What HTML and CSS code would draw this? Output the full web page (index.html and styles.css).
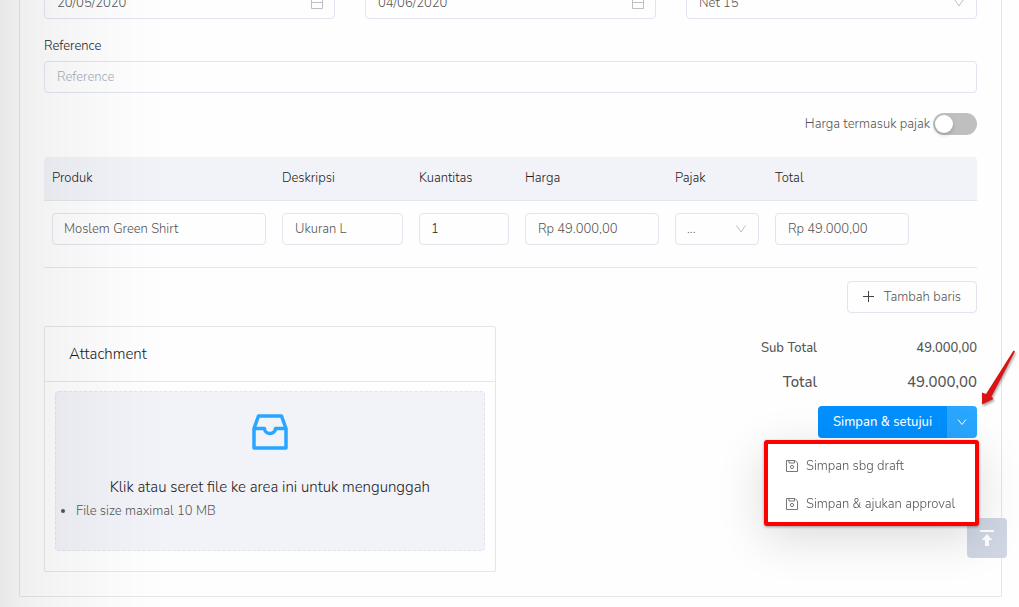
FILE: index.html
```html
<!DOCTYPE html>
<html lang="id">
<head>
<meta charset="utf-8">
<meta name="viewport" content="width=device-width, initial-scale=1">
<title>Tagihan</title>
<link rel="stylesheet" href="styles.css">
</head>
<body>
<main class="card">
  <div class="fields">
    <div class="control">
      <input class="input" type="text" value="20/05/2020" aria-label="Tanggal transaksi">
      <svg class="control-icon" viewBox="0 0 14 14" aria-hidden="true"><path d="M1.500 2.500h11v10h-11zM1.500 6.500h11M4.500 1v3M9.500 1v3"/></svg>
    </div>
    <div class="control">
      <input class="input" type="text" value="04/06/2020" aria-label="Tanggal jatuh tempo">
      <svg class="control-icon" viewBox="0 0 14 14" aria-hidden="true"><path d="M1.500 2.500h11v10h-11zM1.500 6.500h11M4.500 1v3M9.500 1v3"/></svg>
    </div>
    <div class="control">
      <select class="input select" aria-label="Termin"><option>Net 15</option></select>
      <svg class="control-icon" viewBox="0 0 14 14" aria-hidden="true"><path d="M2.500 3.500L7 10l4.500-6.500"/></svg>
    </div>
  </div>

  <div class="reference">
    <label class="label" for="reference">Reference</label>
    <input class="input" id="reference" type="text" placeholder="Reference">
  </div>

  <div class="tax">
    <label for="tax">Harga termasuk pajak</label>
    <input class="switch" id="tax" type="checkbox" role="switch">
  </div>

  <table class="items">
    <colgroup>
      <col class="c-product"><col class="c-desc"><col class="c-qty"><col class="c-price"><col class="c-tax"><col class="c-price"><col class="c-end">
    </colgroup>
    <thead>
      <tr><th>Produk</th><th>Deskripsi</th><th>Kuantitas</th><th>Harga</th><th>Pajak</th><th>Total</th><th></th></tr>
    </thead>
    <tbody>
      <tr>
        <td><input class="input snug" type="text" value="Moslem Green Shirt" aria-label="Produk"></td>
        <td><input class="input" type="text" value="Ukuran L" aria-label="Deskripsi"></td>
        <td><input class="input snug dark" type="text" value="1" aria-label="Kuantitas"></td>
        <td><input class="input" type="text" value="Rp 49.000,00" aria-label="Harga"></td>
        <td>
          <div class="control">
            <select class="input select snug" aria-label="Pajak"><option>...</option></select>
            <svg class="control-icon" viewBox="0 0 14 14" aria-hidden="true"><path d="M2.500 3.500L7 10l4.500-6.500"/></svg>
          </div>
        </td>
        <td><input class="input" type="text" value="Rp 49.000,00" aria-label="Total"></td>
        <td></td>
      </tr>
    </tbody>
  </table>

  <div class="add-row">
    <button class="button" type="button">
      <svg class="plus" viewBox="0 0 12 12" aria-hidden="true"><path d="M5.500 0v11M0 5.500h11"/></svg>
      Tambah baris
    </button>
  </div>

  <div class="bottom">
    <section class="attachment">
      <h2 class="attachment-title">Attachment</h2>
      <div class="attachment-body">
        <div class="dropzone">
          <input class="file" id="file" type="file">
          <label class="drop-label" for="file">
            <svg class="inbox" viewBox="0 0 36 36" aria-hidden="true"><path d="M6.500 2h23L34 14.500V34H2V14.500zM2 14.500h10.500a5.500 5 0 0 0 11 0H34"/></svg>
            Klik atau seret file ke area ini untuk mengunggah
          </label>
          <ul class="hints"><li>File size maximal 10 MB</li></ul>
        </div>
      </div>
    </section>

    <section class="summary">
      <dl class="totals">
        <dt>Sub Total</dt><dd>49.000,00</dd>
        <dt class="grand">Total</dt><dd class="grand">49.000,00</dd>
      </dl>
      <div class="actions">
        <button class="save" type="button">Simpan &amp; setujui</button>
        <button class="more" type="button" aria-label="Opsi lain" aria-expanded="true">
          <svg class="more-icon" viewBox="0 0 10 10" aria-hidden="true"><path d="M1 2.500l4 5 4-5"/></svg>
        </button>
        <div class="menu">
          <button class="menu-item" type="button">
            <svg class="disk" viewBox="0 0 12 12" aria-hidden="true"><path d="M.5.5h8.500l2.500 2.500v8.500H.5zM3 .5v2.500h5.500V.5"/><circle cx="6" cy="7" r="1.600"/></svg>
            Simpan sbg draft
          </button>
          <button class="menu-item" type="button">
            <svg class="disk" viewBox="0 0 12 12" aria-hidden="true"><path d="M.5.5h8.500l2.500 2.500v8.500H.5zM3 .5v2.500h5.500V.5"/><circle cx="6" cy="7" r="1.600"/></svg>
            Simpan &amp; ajukan approval
          </button>
        </div>
        <svg class="arrow" viewBox="0 0 40 60" aria-hidden="true"><path d="M37.500 1.500L39 2.500 15.500 47.500l2 2.500L6 55.500V43.500l4 1.500z"/></svg>
      </div>
    </section>
  </div>
</main>
<button class="to-top" type="button" aria-label="Kembali ke atas">
  <svg class="to-top-icon" viewBox="0 0 14 16" aria-hidden="true"><path d="M0 0h14v2H0zM7 4l5.500 6H9v6H5v-6H1.500z"/></svg>
</button>
<div class="edge-shade"></div>
</body>
</html>
```
FILE: styles.css
```css
* { box-sizing: border-box; }
body {
  margin: 0;
  overflow: hidden;
  background: #fefefe;
  color: #555;
  font: 300 13px/22px Nunito, Lato, sans-serif;
}
button, input, select { font: inherit; color: inherit; }
button { cursor: pointer; }
svg { display: block; fill: none; flex: none; }

.card {
  margin: -13px 17px 0 19px;
  padding: 0 24px 24px;
  border: 1px solid #e4e6e9;
  border-top: 0;
  border-radius: 2px;
}
.fields { display: grid; grid-template-columns: repeat(3, 1fr); gap: 30px; }
.input {
  display: block;
  width: 100%;
  height: 32px;
  padding: 0 12px;
  border: 1px solid #e1e5ee;
  border-radius: 4px;
  background: transparent;
}
.input::placeholder { color: #a9aebb; opacity: 1; }
.snug { padding: 0 11px; }
.dark { color: #262626; }
.select { appearance: none; }
.control { position: relative; }
.control-icon {
  position: absolute;
  top: 9px;
  right: 11px;
  width: 14px;
  height: 14px;
  stroke: #bfbfbf;
  pointer-events: none;
}
.reference { margin-top: 16px; }
.label { display: block; margin-bottom: 4px; color: #1c1c1c; }
.tax {
  display: flex;
  justify-content: flex-end;
  align-items: center;
  gap: 3px;
  margin: 20px 0 22px;
}
.switch {
  appearance: none;
  display: flex;
  align-items: center;
  width: 44px;
  height: 22px;
  margin: 0;
  padding: 0 2px;
  border-radius: 11px;
  background: #bfbfbf;
}
.switch::before {
  content: "";
  width: 18px;
  height: 18px;
  border-radius: 50%;
  background: #fff;
  box-shadow: 0 2px 4px rgba(0, 35, 11, .2);
}

.items { width: 100%; table-layout: fixed; border-collapse: separate; border-spacing: 0; }
.c-product { width: 24.65%; }
.c-desc { width: 14.68%; }
.c-qty { width: 11.36%; }
.c-price { width: 16.08%; }
.c-tax { width: 10.72%; }
.items th {
  height: 44px;
  padding: 0 8px 2px;
  border-bottom: 1px solid #e4e6e9;
  background: #f2f3f8;
  color: #1c1c1c;
  font-weight: inherit;
  text-align: left;
}
.items th:first-child { border-top-left-radius: 4px; }
.items th:last-child { border-top-right-radius: 4px; }
.items td { padding: 12px 8px 22px; border-bottom: 1px solid #e4e6e9; }

.add-row { display: flex; justify-content: flex-end; margin: 13px 0; }
.button {
  display: flex;
  align-items: center;
  gap: 9px;
  height: 32px;
  padding: 0 15px;
  border: 1px solid #e1e5ee;
  border-radius: 4px;
  background: transparent;
}
.plus { width: 12px; height: 12px; stroke: #444; }

.bottom { display: flex; justify-content: space-between; align-items: flex-start; }
.attachment { width: 48.4%; border: 1px solid #e4e6e9; border-radius: 2px; }
.attachment-title {
  margin: 0;
  padding: 16px 24px;
  border-bottom: 1px solid #e4e6e9;
  color: #1c1c1c;
  font-size: 15px;
  font-weight: inherit;
}
.attachment-body { padding: 9px 10px 20px; }
.dropzone {
  position: relative;
  padding: 22px 0 28px;
  border: 1px dashed #e1e5ee;
  border-radius: 4px;
  background: #f2f3f8;
}
.file { position: absolute; width: 1px; height: 1px; opacity: 0; }
.drop-label {
  display: flex;
  flex-direction: column;
  align-items: center;
  gap: 26px;
  color: #1c1c1c;
  font-size: 15px;
}
.inbox { width: 36px; height: 36px; stroke: #29a6ff; stroke-width: 3.500; stroke-linejoin: round; }
.hints { margin: 2px 0 0; padding-left: 20px; }

.summary { display: flex; flex-direction: column; align-items: flex-end; padding-top: 11px; }
.totals {
  display: grid;
  grid-template-columns: auto 160px;
  row-gap: 12px;
  margin: 0 0 13px;
  font-weight: 500;
  text-align: right;
}
.totals dd { margin: 0; }
.grand { font-size: 15px; }
.actions { position: relative; display: flex; }
.save, .more { height: 32px; border: 0; color: #fff; font-weight: 500; }
.save { padding: 0 15px; border-radius: 4px 0 0 4px; background: #0190fe; }
.more {
  display: grid;
  place-items: center;
  width: 30px;
  padding: 0;
  border-radius: 0 4px 4px 0;
  background: #29a6ff;
}
.more-icon { width: 10px; height: 10px; stroke: #fff; }
.menu {
  position: absolute;
  z-index: 2;
  top: 34px;
  right: -2px;
  width: 215px;
  padding: 2px 0 0;
  border: 4px solid #fe0000;
  border-radius: 3px;
  background: #fff;
  box-shadow: 0 1px 3px rgba(0, 0, 0, .35), 0 12px 48px rgba(0, 0, 0, .14);
}
.menu-item {
  display: flex;
  align-items: center;
  gap: 8px;
  width: 100%;
  height: 38px;
  padding: 2px 18px 0;
  border: 0;
  background: none;
  white-space: nowrap;
}
.disk { width: 12px; height: 12px; stroke: #777; }
.arrow {
  position: absolute;
  z-index: 3;
  top: -57px;
  right: -39px;
  width: 40px;
  height: 60px;
  fill: #d81414;
  filter: drop-shadow(1px 2px 1px rgba(0, 0, 0, .35));
}

.to-top {
  position: fixed;
  right: 12px;
  bottom: 49px;
  display: grid;
  place-items: center;
  width: 40px;
  height: 40px;
  padding: 0;
  border: 0;
  border-radius: 4px;
  background: #d0d6e4;
}
.to-top-icon { width: 14px; height: 16px; fill: #fff; }
.edge-shade {
  position: fixed;
  inset: 0 auto 0 0;
  width: 165px;
  background: linear-gradient(90deg, rgba(0, 0, 10, .085), rgba(0, 0, 10, .055) 15%, rgba(0, 0, 10, .035) 38%, rgba(0, 0, 10, .01) 75%, transparent);
  pointer-events: none;
}
```
